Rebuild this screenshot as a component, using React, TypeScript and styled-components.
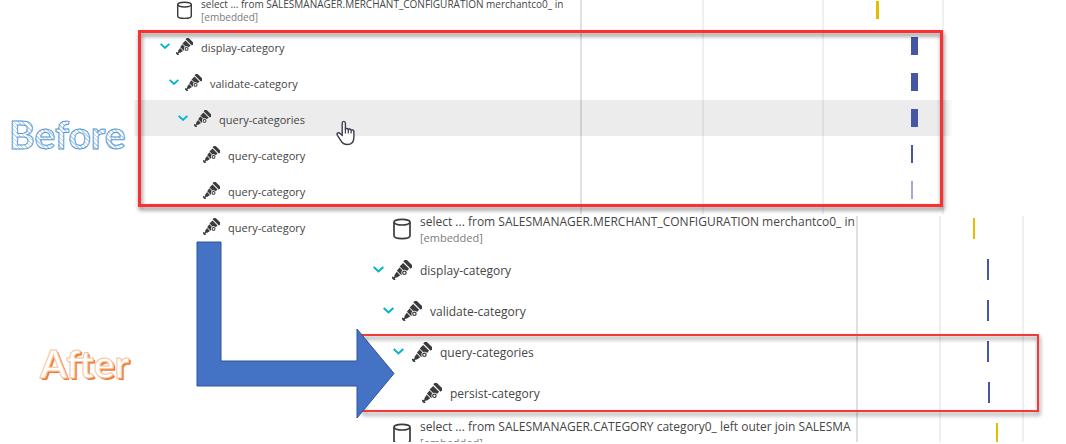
import React from "react";
import styled, { createGlobalStyle, css } from "styled-components";

type Kind = "database" | "span";
type Tone = "yellow" | "blue" | "pale";

interface TraceRow {
  kind: Kind;
  level: number;
  name: string;
  note?: string;
  open?: boolean;
  active?: boolean;
  at: number;
  width: number;
  tone: Tone;
}

const beforeRows: TraceRow[] = [
  {
    kind: "database",
    level: 0,
    name: "select ... from SALESMANAGER.MERCHANT_CONFIGURATION merchantco0_ in",
    note: "[embedded]",
    at: 79.5,
    width: 3,
    tone: "yellow",
  },
  { kind: "span", level: 0, name: "display-category", open: true, at: 89, width: 7, tone: "blue" },
  { kind: "span", level: 1, name: "validate-category", open: true, at: 89, width: 7, tone: "blue" },
  { kind: "span", level: 2, name: "query-categories", open: true, active: true, at: 89, width: 7, tone: "blue" },
  { kind: "span", level: 3, name: "query-category", at: 89, width: 2, tone: "blue" },
  { kind: "span", level: 3, name: "query-category", at: 89, width: 2, tone: "pale" },
  { kind: "span", level: 3, name: "query-category", at: 89, width: 0, tone: "pale" },
];

const afterRows: TraceRow[] = [
  {
    kind: "database",
    level: 0,
    name: "select ... from SALESMANAGER.MERCHANT_CONFIGURATION merchantco0_ in",
    note: "[embedded]",
    at: 58,
    width: 2,
    tone: "yellow",
  },
  { kind: "span", level: 0, name: "display-category", open: true, at: 65, width: 2, tone: "blue" },
  { kind: "span", level: 1, name: "validate-category", open: true, at: 65, width: 2, tone: "blue" },
  { kind: "span", level: 2, name: "query-categories", open: true, at: 65, width: 2, tone: "blue" },
  { kind: "span", level: 3, name: "persist-category", at: 65.5, width: 2, tone: "blue" },
  {
    kind: "database",
    level: 0,
    name: "select ... from SALESMANAGER.CATEGORY category0_ left outer join SALESMA",
    note: "[embedded]",
    at: 69.5,
    width: 2,
    tone: "yellow",
  },
];

const GlobalStyle = createGlobalStyle`
  *, *::before, *::after { box-sizing: border-box; }
  body { margin: 0; background: #fff; font-family: "Open Sans", "Noto Sans", sans-serif; color: #454646; }
`;

const Page = styled.main`
  position: relative;
  overflow: hidden;
  padding-bottom: 2px;
`;

const BeforeSection = styled.section`
  display: flex;
  align-items: center;
  padding-right: 114px;
`;

const AfterSection = styled.section`
  display: flex;
  align-items: center;
  margin-top: -20px;
  padding-right: 9px;
`;

const Heading = styled.h2`
  margin: 0;
  font-family: Lato, sans-serif;
  font-size: 39px;
  line-height: 48px;
  font-weight: 700;
`;

const BeforeHeading = styled(Heading)`
  flex: 0 0 134px;
  padding: 32px 0 0 9px;
  color: transparent;
  background: repeating-linear-gradient(45deg, #fff 0 2px, #b9d5ef 2px 3px);
  background-clip: text;
  -webkit-background-clip: text;
  -webkit-text-stroke: 1px #5b9bd5;
`;

const AfterHeading = styled(Heading)`
  flex: 0 0 343px;
  padding: 68px 0 0 40px;
  color: #fff;
  -webkit-text-stroke: 1px #f8c4a0;
  text-shadow: 1px 1px 0 #ed7d31, 2px 2px 0 #ed7d31;
`;

const Panel = styled.div`
  position: relative;
  flex: 1;
  min-width: 0;
`;

const Rows = styled.ul<{ $large?: boolean }>`
  list-style: none;
  margin: 0;
  padding: 0;
  overflow: hidden;
  ${(p) =>
    p.$large
      ? css`
          --row: 41px;
          --names: 514px;
          --inset: 30px;
          --indent: 10px;
          --chevron: 11px;
          --chevron-gap: 8px;
          --icon: 20px;
          --bar: 21px;
          --line: 16px;
          --name: 12px;
          --statement: 12px;
          --note: 11px;
          height: 226px;
        `
      : css`
          --row: 36px;
          --names: 447px;
          --inset: 26px;
          --indent: 9px;
          --chevron: 10px;
          --chevron-gap: 6px;
          --icon: 17px;
          --bar: 18px;
          --line: 13px;
          --name: 11px;
          --statement: 10px;
          --note: 10px;
          height: 236px;
        `}
`;

const Row = styled.li<{ $active?: boolean }>`
  display: flex;
  align-items: center;
  height: var(--row);
  background: ${(p) => (p.$active ? "linear-gradient(90deg, #f6f6f6, #ececec 8px, #ececec calc(100% - 8px), #fafafa)" : "none")};

  &:first-child {
    margin-top: -8px;
  }
`;

const NameCell = styled.div<{ $level: number }>`
  flex: 0 0 var(--names);
  min-width: 0;
  display: flex;
  align-items: center;
  padding-left: calc(var(--inset) + var(--indent) * ${(p) => p.$level});
`;

const ToggleSlot = styled.span`
  flex: 0 0 var(--chevron);
  display: flex;
  margin-right: var(--chevron-gap);
`;

const Toggle = styled.button`
  width: 100%;
  display: flex;
  border: 0;
  padding: 0;
  background: none;
  color: #00b4cc;
  cursor: pointer;

  svg {
    width: 100%;
  }
`;

const IconSlot = styled.span`
  flex: 0 0 var(--icon);
  display: flex;
  margin-right: 8px;

  svg {
    width: 100%;
  }
`;

const Label = styled.span<{ $kind: Kind }>`
  padding-top: 2px;
  white-space: nowrap;
  font-size: ${(p) => (p.$kind === "database" ? "var(--statement)" : "var(--name)")};
  line-height: var(--line);
`;

const Note = styled.span`
  display: block;
  font-size: var(--note);
  color: #7c7c7c;
`;

const Track = styled.div`
  flex: 1;
`;

const barColors: Record<Tone, string> = { yellow: "#e6be00", blue: "#4556a6", pale: "#a0a9d8" };

const Bar = styled.div<{ $tone: Tone; $width: number }>`
  width: ${(p) => p.$width}px;
  height: var(--bar);
  background: ${(p) => barColors[p.$tone]};
`;

const GridLines = styled.div<{ $names: number; $columns: string; $bottom: number }>`
  position: absolute;
  inset: 0 0 ${(p) => p.$bottom}px ${(p) => p.$names}px;
  display: grid;
  grid-template-columns: ${(p) => p.$columns};
  pointer-events: none;

  span {
    border-left: 2px solid rgba(0, 0, 0, 0.06);
  }
  span:first-child {
    border-left-color: rgba(0, 0, 0, 0.12);
  }
`;

const Highlight = styled.div`
  position: absolute;
  filter: drop-shadow(1px 3px 2px rgba(0, 0, 0, 0.5));
  pointer-events: none;
`;

const BeforeHighlight = styled(Highlight)`
  inset: 30px 9px 29px 4px;
  border: 3px solid #fb3131;
`;

const AfterHighlight = styled(Highlight)`
  inset: 118px 18px 30px 19px;
  border: 2px solid #f23a3a;
`;

const Pointer = styled.svg`
  position: absolute;
  left: 202px;
  top: 120px;
  width: 20px;
  height: 26px;
`;

const Arrow = styled.svg`
  position: absolute;
  left: 196px;
  top: 241px;
  width: 200px;
  height: 180px;
  pointer-events: none;
`;

function Telescope() {
  return (
    <svg viewBox="0 0 20 20" aria-hidden="true">
      <g transform="translate(1.4 18.6) rotate(-45)" fill="#3a3b3b">
        <path d="M-.8-2.200H.9v1.300h2V-1.700L7.200-2.400V2.400L2.900 1.700V.9h-2v1.300H-.8z" />
        <path d="M8-3l4.200-.6V3.600L8 3z" />
        <path d="M13-4.200h5V4.200h-5z" />
        <path d="M19.200-5.200h3.500V5.200h-3.500z" />
      </g>
      <circle cx="12.400" cy="12.800" r="3" fill="#fff" />
      <circle cx="12.400" cy="12.800" r="1.700" fill="#fff" stroke="#3a3b3b" strokeWidth="1.200" />
    </svg>
  );
}

function Database() {
  return (
    <svg viewBox="0 0 20 22" aria-hidden="true" fill="none" stroke="#3a3b3b" strokeWidth="1.700">
      <ellipse cx="10" cy="4.200" rx="8" ry="2.800" />
      <path d="M2 4.200v13.600c0 1.600 3.400 2.800 8 2.800s8-1.200 8-2.800V4.200" />
    </svg>
  );
}

function Chevron() {
  return (
    <svg viewBox="0 0 11 7" aria-hidden="true" fill="none" stroke="currentColor" strokeWidth="2">
      <path d="M.7.9l4.800 4.500L10.300.9" />
    </svg>
  );
}

function Trace({ rows, large }: { rows: TraceRow[]; large?: boolean }) {
  return (
    <Rows $large={large}>
      {rows.map((row, i) => (
        <Row key={i} $active={row.active}>
          <NameCell $level={row.level}>
            <ToggleSlot>
              {row.open && (
                <Toggle type="button" aria-expanded="true" aria-label={`Collapse ${row.name}`}>
                  <Chevron />
                </Toggle>
              )}
            </ToggleSlot>
            <IconSlot>{row.kind === "span" ? <Telescope /> : <Database />}</IconSlot>
            <Label $kind={row.kind}>
              {row.name}
              {row.note && <Note>{row.note}</Note>}
            </Label>
          </NameCell>
          <Track>
            <Bar $tone={row.tone} $width={row.width} style={{ marginLeft: `${row.at}%` }} />
          </Track>
        </Row>
      ))}
    </Rows>
  );
}

export default function App() {
  return (
    <Page>
      <GlobalStyle />
      <BeforeSection>
        <BeforeHeading>Before</BeforeHeading>
        <Panel>
          <Trace rows={beforeRows} />
          <GridLines $names={446} $bottom={22} $columns="122fr 120fr 120fr 10fr">
            <span />
            <span />
            <span />
            <span />
          </GridLines>
          <BeforeHighlight />
          <Pointer viewBox="0 0 20 26" aria-hidden="true">
            <path
              d="M6.2 15.5V3.2c0-2.4 3.2-2.4 3.2 0v6.2c.2-1.400 2.800-1.300 2.900.4.4-1.200 2.700-1 2.800.7.6-1 2.800-.7 2.800 1.200v5.200c0 4.600-2.400 7.600-6.600 7.600-3.300 0-5.100-1.400-6.600-4.200L1.300 15.200c-1-2 1.300-3.400 2.800-1.700z"
              fill="#fff"
              stroke="#3c3c4c"
              strokeWidth="1.400"
              strokeLinejoin="round"
            />
            <path d="M9.400 9v4.500M12.300 9.800v3.700M15.100 10.500v3" stroke="#3c3c4c" strokeWidth="1.200" />
          </Pointer>
        </Panel>
      </BeforeSection>
      <AfterSection>
        <AfterHeading>After</AfterHeading>
        <Panel>
          <Trace rows={afterRows} large />
          <GridLines $names={513} $bottom={0} $columns="83fr 83fr 35fr">
            <span />
            <span />
            <span />
          </GridLines>
          <AfterHighlight />
        </Panel>
      </AfterSection>
      <Arrow viewBox="196 241 200 180" aria-hidden="true">
        <path
          d="M197 242h24v119h136v-32l37 44.500L357 418v-32H197z"
          fill="#4472c4"
          stroke="#2f5597"
          strokeWidth="1"
        />
      </Arrow>
    </Page>
  );
}
